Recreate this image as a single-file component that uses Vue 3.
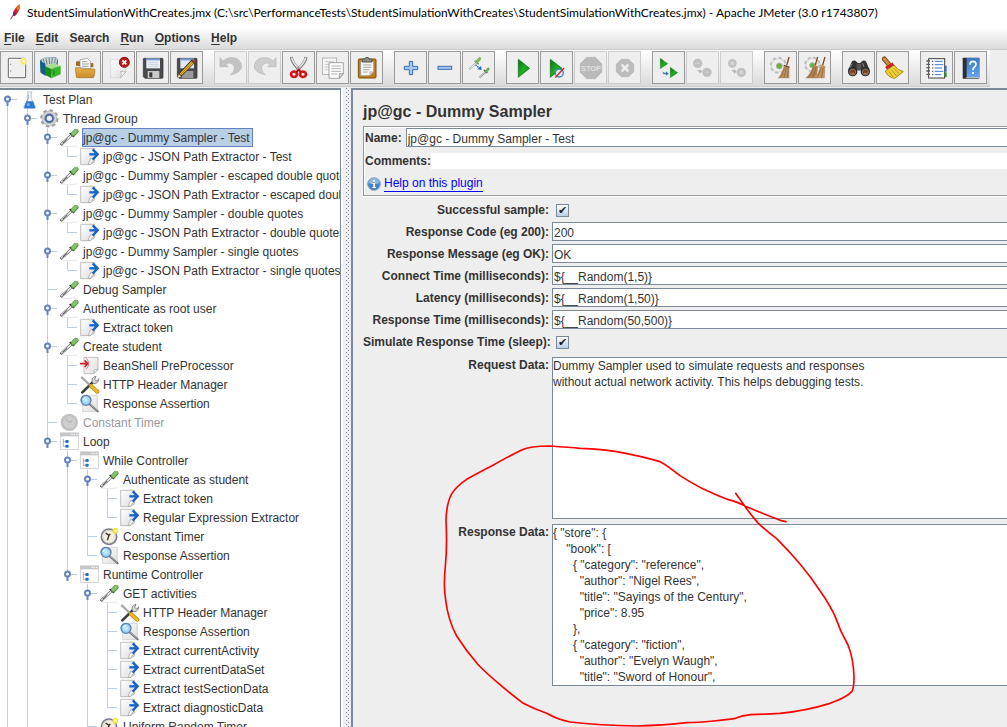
<template>
  <div class="window">
    <!-- icon library: toolbar icons use a 93x93 box, tree icons a 60x57 box -->
    <svg class="icon-defs" aria-hidden="true">
      <defs>
        <linearGradient id="gGreen" x1="0" y1="0" x2="1" y2="1">
          <stop offset="0" stop-color="#0c6a10" />
          <stop offset="0.5" stop-color="#1fb022" />
          <stop offset="1" stop-color="#0a7a10" />
        </linearGradient>
        <linearGradient id="gPage" x1="0" y1="0" x2="1" y2="1">
          <stop offset="0" stop-color="#ffffff" />
          <stop offset="1" stop-color="#dcdcdc" />
        </linearGradient>
        <linearGradient id="gFolder" x1="0" y1="0" x2="0" y2="1">
          <stop offset="0" stop-color="#e9b44c" />
          <stop offset="1" stop-color="#c8892a" />
        </linearGradient>
        <linearGradient id="gBook" x1="0" y1="0" x2="0" y2="1">
          <stop offset="0" stop-color="#3a76c4" />
          <stop offset="1" stop-color="#64a4ee" />
        </linearGradient>
        <radialGradient id="gLens">
          <stop offset="0" stop-color="#d8f3ff" />
          <stop offset="1" stop-color="#7cc4ec" />
        </radialGradient>
      </defs>

      <symbol id="new" viewBox="3 3 93 93">
        <rect x="25" y="22" width="52" height="58" rx="2" fill="url(#gPage)" stroke="#686868" stroke-width="3" />
        <rect x="29" y="26" width="44" height="50" fill="#efefef" stroke="#fff" stroke-width="2" />
        <path d="M32 38v4M32 58v4" stroke="#888" stroke-width="3" />
        <circle cx="71" cy="31" r="11" fill="#f7ee9a" />
        <circle cx="71" cy="31" r="7" fill="#f3e14e" />
        <circle cx="71" cy="31" r="4" fill="#fffde0" />
      </symbol>
      <symbol id="templates" viewBox="3 3 93 93">
        <path d="M18 28L30 20L66 19L72 26V62L36 74L20 64Z" fill="#287f9f" />
        <path d="M22 26L30 20H66L70 24L66 46L30 44Z" fill="#c9d3d5" />
        <path d="M28 24l4 18M36 22l3 18M45 21l2 18M55 21l-2 18M64 22l-3 18" stroke="#6e8286" stroke-width="3" />
        <path d="M18 30l16 8v36l-14-9z" fill="#155f86" />
        <path d="M34 46L52 54V82L35 72Z" fill="#1e8a1e" />
        <path d="M52 54L80 44V70L52 82Z" fill="#37b82c" />
        <path d="M34 46L60 36L80 44L52 54Z" fill="#a7e08d" />
        <path d="M60 58v14" stroke="#1e8a1e" stroke-width="4" />
      </symbol>
      <symbol id="open" viewBox="3 3 93 93">
        <path d="M24 44V34q0-3 3-3h12l4 5h30q3 0 3 3v10" fill="#a4681a" />
        <path d="M36 50V26l22-4l10 10v22z" fill="#fbfbfb" stroke="#8d8d8d" stroke-width="2" />
        <path d="M42 32h16M42 39h20M42 46h20" stroke="#9d9d9d" stroke-width="3" />
        <path d="M22 50h12l8 4h37q3 0 2 4l-3 19q-1 3-4 3H28q-3 0-3-3z" fill="url(#gFolder)" stroke="#a96f1a" stroke-width="2" />
      </symbol>
      <symbol id="close" viewBox="3 3 93 93">
        <path d="M26 26H72V62L56 80H26Z" fill="url(#gPage)" stroke="#d2d2d2" stroke-width="2" />
        <path d="M72 62L56 80Q60 68 56 60Q64 65 72 62Z" fill="#fff" stroke="#9a9a9a" stroke-width="2" />
        <circle cx="67" cy="34" r="15" fill="#c01414" stroke="#8d0a0a" stroke-width="3" />
        <path d="M61 28l12 12M73 28l-12 12" stroke="#fff" stroke-width="5" />
      </symbol>
      <symbol id="save" viewBox="3 3 93 93">
        <path d="M24 22H78q3 0 3 3V79q0 3-3 3H27l-5-5V25q0-3 2-3z" fill="#4a4a4e" stroke="#2c2c2e" stroke-width="2" />
        <rect x="31" y="23" width="41" height="29" fill="#eef3fa" />
        <rect x="31" y="23" width="41" height="5" fill="#6d9ad4" />
        <path d="M36 34h31M36 40h31M36 46h31" stroke="#b9c0cb" stroke-width="2" />
        <rect x="35" y="60" width="35" height="21" fill="#c9c9c9" />
        <rect x="40" y="64" width="9" height="15" fill="#3b3b3e" />
      </symbol>
      <symbol id="saveas" viewBox="3 3 93 93">
        <path d="M24 22H78q3 0 3 3V79q0 3-3 3H27l-5-5V25q0-3 2-3z" fill="#4a4a4e" stroke="#2c2c2e" stroke-width="2" />
        <rect x="31" y="23" width="41" height="29" fill="#dfe8f5" />
        <rect x="31" y="23" width="41" height="5" fill="#6d9ad4" />
        <rect x="35" y="60" width="35" height="21" fill="#9a9a9a" />
        <path d="M22 82L27 66L66 25L76 34L36 75Z" fill="#2f2a1a" />
        <path d="M28 69L64 31L71 37L35 73Z" fill="#e9b52c" />
        <path d="M31 72L68 33" stroke="#8a6512" stroke-width="2" />
        <path d="M66 29L70 25L77 31L73 36Z" fill="#b5432d" />
        <path d="M22 82L26 70L34 76Z" fill="#efdcb0" />
      </symbol>
      <symbol id="undo" viewBox="3 3 93 93">
        <path d="M18 20V47H43L35 39Q52 31 60 44Q65 58 50 71Q82 66 83 45Q80 18 47 20Q34 22 27 30Z" fill="#c3c3c3" stroke="#b6b6b6" stroke-width="2" />
      </symbol>
      <symbol id="redo" viewBox="3 3 93 93">
        <path d="M84 20V47H59L67 39Q50 31 42 44Q37 58 52 71Q20 66 19 45Q22 18 55 20Q68 22 75 30Z" fill="#cdcdcd" stroke="#b6b6b6" stroke-width="2" />
      </symbol>
      <symbol id="cut" viewBox="3 3 93 93">
        <path d="M28 18Q30 36 54 58M72 18Q70 36 44 58" stroke="#777" stroke-width="9" fill="none" />
        <path d="M29 20Q32 36 54 57M71 20Q68 36 44 57" stroke="#e4e4e4" stroke-width="5" fill="none" />
        <circle cx="49" cy="53" r="4" fill="#d5d5d5" stroke="#666" stroke-width="2" />
        <ellipse cx="36" cy="70" rx="9" ry="8" fill="#eee" stroke="#d21717" stroke-width="8" />
        <ellipse cx="63" cy="70" rx="9" ry="8" fill="#eee" stroke="#d21717" stroke-width="8" />
        <path d="M43 64L50 56L57 64" stroke="#b40f0f" stroke-width="6" fill="none" />
      </symbol>
      <symbol id="copy" viewBox="3 3 93 93">
        <rect x="19" y="21" width="43" height="49" fill="#f7f7f7" stroke="#9a9a9a" stroke-width="2" />
        <path d="M26 32h28M26 40h28M26 48h28M26 56h28" stroke="#c6c6c6" stroke-width="3" />
        <path d="M39 35H82V68L70 82H39Z" fill="#fcfcfc" stroke="#7c7c7c" stroke-width="2" />
        <path d="M46 45h29M46 53h29M46 61h29M46 69h18" stroke="#b0b0b0" stroke-width="3" />
        <path d="M82 68L70 82V68Z" fill="#ddd" stroke="#7c7c7c" stroke-width="2" />
      </symbol>
      <symbol id="paste" viewBox="3 3 93 93">
        <rect x="25" y="24" width="53" height="57" rx="3" fill="#c17d1a" stroke="#7f4f0c" stroke-width="3" />
        <path d="M32 31H71V62L59 74H32Z" fill="#f8f8f8" stroke="#8f8f8f" stroke-width="2" />
        <path d="M39 42h25M39 49h25M39 56h20M39 63h14" stroke="#a5a5a5" stroke-width="3" />
        <path d="M71 62L59 74V62Z" fill="#ccc" stroke="#8f8f8f" />
        <path d="M37 33V27q0-3 4-3h4q0-5 6-5t6 5h5q4 0 4 3v6z" fill="#8d8f88" stroke="#4f514c" stroke-width="3" />
      </symbol>
      <symbol id="plus" viewBox="3 3 93 93">
        <path d="M46 31h10v15h15v10h-15v15h-10v-15h-15v-10h15z" fill="#a4c8ee" stroke="#3c6cae" stroke-width="3" />
      </symbol>
      <symbol id="minus" viewBox="3 3 93 93">
        <rect x="30" y="46" width="41" height="9" fill="#a4c8ee" stroke="#3c6cae" stroke-width="3" />
      </symbol>
      <symbol id="toggle" viewBox="3 3 93 93">
        <path d="M22 55L45 34" stroke="#a7ada4" stroke-width="6" />
        <path d="M23 54L45 34" stroke="#f3f3f3" stroke-width="3" />
        <path d="M38 29L50 40" stroke="#5d8450" stroke-width="4" />
        <path d="M44 33L53 23" stroke="#79b45d" stroke-width="9" stroke-linecap="round" />
        <path d="M41 42L54 53" stroke="#1b63d8" stroke-width="4" stroke-dasharray="4 2" />
        <path d="M59 57L46 55L57 45Z" fill="#1b63d8" />
        <path d="M53 79L72 62" stroke="#888" stroke-width="5" />
        <path d="M54 78L71 62" stroke="#eee" stroke-width="2" />
        <path d="M66 57L76 66" stroke="#31562a" stroke-width="4" />
        <path d="M72 61L79 54" stroke="#6ea653" stroke-width="8" stroke-linecap="round" />
      </symbol>
      <symbol id="start" viewBox="3 3 93 93">
        <path d="M37 25L71 52L37 79Z" fill="url(#gGreen)" stroke="#0a6a0e" stroke-width="2" />
      </symbol>
      <symbol id="nopause" viewBox="3 3 93 93">
        <path d="M31 25L66 52L31 79Z" fill="url(#gGreen)" stroke="#0a6a0e" stroke-width="2" />
        <circle cx="58" cy="66" r="12" fill="#dfe9f5" stroke="#4d7fbd" stroke-width="4" />
        <path d="M46 80L72 51" stroke="#d32020" stroke-width="4" />
      </symbol>
      <symbol id="stop" viewBox="3 3 93 93">
        <path d="M38 19H64L83 38V64L64 83H38L19 64V38Z" fill="#b9b9b9" stroke="#b0b0b0" stroke-width="2" />
        <text x="51" y="60" text-anchor="middle" font-family="Liberation Sans" font-size="22" font-weight="bold" fill="#e2e2e2">STOP</text>
      </symbol>
      <symbol id="shutdown" viewBox="3 3 93 93">
        <path d="M40 25H62L77 40V62L62 77H40L25 62V40Z" fill="#bcbcbc" stroke="#b0b0b0" stroke-width="2" />
        <path d="M41 41L61 61M61 41L41 61" stroke="#eee" stroke-width="8" />
      </symbol>
      <symbol id="remotestart" viewBox="3 3 93 93">
        <path d="M25 22L47 38L25 53Z" fill="url(#gGreen)" stroke="#0a6a0e" stroke-width="1" />
        <path d="M55 49L77 65L55 80Z" fill="url(#gGreen)" stroke="#0a6a0e" stroke-width="1" />
        <path d="M31 61L36 65H42V61L50 68L42 74V70H34Z" fill="#3f72ae" />
      </symbol>
      <symbol id="remotestop" viewBox="3 3 93 93">
        <circle cx="35" cy="37" r="14" fill="#c0c0c0" />
        <circle cx="63" cy="64" r="14" fill="#c0c0c0" />
        <path d="M28 37h14M56 64h14" stroke="#cecece" stroke-width="4" />
        <path d="M32 58h9v-3l8 6l-8 7v-4z" fill="#b4b4b4" />
      </symbol>
      <symbol id="remoteshutdown" viewBox="3 3 93 93">
        <circle cx="37" cy="37" r="13" fill="#c0c0c0" />
        <circle cx="64" cy="64" r="14" fill="#c0c0c0" />
        <path d="M32 32l10 10M42 32l-10 10M59 59l10 10M69 59l-10 10" stroke="#dadada" stroke-width="4" />
        <path d="M33 58h9v-3l8 6l-8 7v-4z" fill="#b4b4b4" />
      </symbol>
      <symbol id="clear" viewBox="3 3 93 93">
        <circle cx="43" cy="43" r="21" fill="#ececec" stroke="#bcbcbc" stroke-width="9" stroke-dasharray="9 7.5" />
        <circle cx="43" cy="43" r="20" fill="#efefef" stroke="#c2c2c2" stroke-width="2" />
        <circle cx="46" cy="45" r="9" fill="#62b53c" stroke="#a9b5a2" stroke-width="3" />
        <path d="M75 18L68 44" stroke="#7e4a1e" stroke-width="4" />
        <path d="M60 42L76 47V82H41Q56 66 60 42Z" fill="#b98f63" />
        <path d="M62 50L50 80M67 50L60 80M73 50L70 80" stroke="#8a6238" stroke-width="2" />
        <path d="M59 43L77 49" stroke="#6b3b17" stroke-width="3" />
      </symbol>
      <symbol id="clearall" viewBox="3 3 93 93">
        <circle cx="43" cy="41" r="20" fill="#ececec" stroke="#bcbcbc" stroke-width="9" stroke-dasharray="9 7" />
        <circle cx="43" cy="41" r="19" fill="#efefef" stroke="#c2c2c2" stroke-width="2" />
        <circle cx="43" cy="43" r="8" fill="#62b53c" stroke="#a9b5a2" stroke-width="3" />
        <path d="M59 18L52 42M81 18L74 42" stroke="#7e4a1e" stroke-width="4" />
        <path d="M46 40L60 46L56 82H22Q42 64 46 40Z" fill="#b08354" />
        <path d="M68 40L82 46L80 82H48Q64 64 68 40Z" fill="#bf966a" />
        <path d="M48 50L32 80M54 50L44 80M70 50L58 80M76 50L70 80" stroke="#83592e" stroke-width="2" />
      </symbol>
      <symbol id="search" viewBox="3 3 93 93">
        <path d="M29 33q3-5 11-4l8 7h6l8-7q8-1 11 4l10 25H18z" fill="#333" />
        <rect x="44" y="38" width="14" height="20" fill="#555" />
        <circle cx="32" cy="62" r="14" fill="#2b2b2b" />
        <circle cx="70" cy="62" r="14" fill="#2b2b2b" />
        <circle cx="32" cy="63" r="9" fill="#7b3c1d" stroke="#9b9b9b" stroke-width="2" />
        <circle cx="70" cy="63" r="9" fill="#7b3c1d" stroke="#9b9b9b" stroke-width="2" />
        <path d="M28 66q4 4 8 0M66 66q4 4 8 0" stroke="#ef8a3c" stroke-width="3" fill="none" />
        <path d="M30 38l-6 12M62 36l4 12" stroke="#8a8a8a" stroke-width="3" />
      </symbol>
      <symbol id="resetsearch" viewBox="3 3 93 93">
        <path d="M25 24L40 42" stroke="#7c4a14" stroke-width="15" stroke-linecap="round" />
        <path d="M25 24L40 42" stroke="#c98d42" stroke-width="9" stroke-linecap="round" />
        <path d="M32 58L54 42Q64 58 82 62L56 82Q36 80 28 60Z" fill="#f0cf37" stroke="#a78611" stroke-width="3" />
        <path d="M40 62L50 78M47 57L62 75M54 52L70 70" stroke="#b99a1d" stroke-width="3" />
        <path d="M30 52L52 38" stroke="#cf1c1c" stroke-width="9" />
      </symbol>
      <symbol id="functions" viewBox="3 3 93 93">
        <rect x="26" y="23" width="48" height="58" fill="#fff" stroke="#3e3e3e" stroke-width="3" />
        <rect x="74" y="44" width="6" height="18" fill="#2b6fd0" />
        <rect x="74" y="64" width="6" height="14" fill="#1f9a2e" />
        <path d="M19 30h11M19 40h11M19 50h11M19 60h11M19 70h11" stroke="#5a5a5a" stroke-width="4" />
        <path d="M36 31h4M36 41h4M36 51h4M36 61h4M36 71h4" stroke="#444" stroke-width="3" />
        <path d="M44 31h24M44 41h26M44 51h22M44 61h26M44 71h20" stroke="#3d76d4" stroke-width="3" />
      </symbol>
      <symbol id="help" viewBox="3 3 93 93">
        <rect x="26" y="20" width="50" height="63" rx="2" fill="#2d2f36" />
        <rect x="38" y="21" width="38" height="57" fill="url(#gBook)" />
        <path d="M37 80H75" stroke="#d8d8d8" stroke-width="3" />
        <path d="M48 41Q48 31 57 31Q66 31 66 40Q66 45 60 49Q57 52 57 58" fill="none" stroke="#fff" stroke-width="5" />
        <rect x="54" y="63" width="6" height="6" fill="#fff" />
      </symbol>

      <symbol id="flask" viewBox="0 0 60 57">
        <path d="M22 6H36L34 12V25L46 50Q48 56 42 56H16Q10 56 12 50L24 25V12Z" fill="#eef4fa" stroke="#9fb0c2" stroke-width="2" />
        <path d="M19 34H39L45 50Q47 55 42 55H16Q11 55 13 50Z" fill="#2b7bd6" />
        <path d="M24 14V27L18 40" stroke="#6d7f92" stroke-width="2" fill="none" />
        <circle cx="25" cy="44" r="4" fill="#8cc0f5" />
      </symbol>
      <symbol id="gear" viewBox="0 0 60 57">
        <circle cx="28" cy="28" r="23" fill="none" stroke="#9b9da1" stroke-width="9" stroke-dasharray="10 8" />
        <circle cx="28" cy="28" r="22" fill="#d9dadc" stroke="#a2a4a8" stroke-width="2" />
        <circle cx="28" cy="28" r="11" fill="#e9f0fa" stroke="#4b6aa3" stroke-width="6" />
        <circle cx="28" cy="28" r="15" fill="none" stroke="#8a93a5" stroke-width="2" />
      </symbol>
      <symbol id="dropper" viewBox="0 0 60 57">
        <path d="M2 54Q30 58 54 54" stroke="#ddd" stroke-width="2" fill="none" />
        <path d="M2 51L38 18" stroke="#6a6a6a" stroke-width="8" />
        <path d="M4 49L36 20" stroke="#f5f5f5" stroke-width="4" />
        <path d="M8 46L22 33" stroke="#555" stroke-width="3" />
        <path d="M29 15L42 27" stroke="#2c3b28" stroke-width="5" />
        <path d="M40 18L48 10" stroke="#4f873c" stroke-width="15" stroke-linecap="round" />
        <path d="M40 17L48 9" stroke="#84c26a" stroke-width="11" stroke-linecap="round" />
      </symbol>
      <symbol id="extract" viewBox="0 0 60 57">
        <path d="M2 4H44V44L30 53H2Z" fill="url(#gPage)" stroke="#a5a5a5" stroke-width="2" />
        <path d="M24 53L32 34L42 38L32 52Z" fill="#f4f4f4" stroke="#9c9c9c" stroke-width="2" />
        <path d="M28 22H50" stroke="#1464cc" stroke-width="7" />
        <path d="M38 7L53 22L38 38" stroke="#1464cc" stroke-width="7" fill="none" />
      </symbol>
      <symbol id="preproc" viewBox="0 0 60 57">
        <path d="M12 4H54V40L42 53H12Z" fill="url(#gPage)" stroke="#a5a5a5" stroke-width="2" />
        <path d="M54 40L42 53V42Z" fill="#fff" stroke="#9c9c9c" stroke-width="2" />
        <path d="M0 23H20M14 13L23 23L14 33" stroke="#cc2222" stroke-width="5" fill="none" />
        <path d="M18 5Q34 24 18 40" stroke="#cc2222" stroke-width="3" fill="none" opacity="0.6" />
      </symbol>
      <symbol id="tools" viewBox="0 0 60 57">
        <path d="M7 52L40 20" stroke="#3a3a3a" stroke-width="8" stroke-linecap="round" />
        <path d="M36 21Q34 6 48 4L44 14L51 18L56 11Q56 26 42 26Z" fill="#d5d5d5" stroke="#666" stroke-width="2" />
        <path d="M4 6L30 31" stroke="#8a8a8a" stroke-width="6" />
        <path d="M4 6L30 31" stroke="#e6e6e6" stroke-width="2" />
        <path d="M33 33L52 50" stroke="#b8860b" stroke-width="12" stroke-linecap="round" />
        <path d="M33 33L52 50" stroke="#f0b81e" stroke-width="8" stroke-linecap="round" />
      </symbol>
      <symbol id="magnifier" viewBox="0 0 60 57">
        <path d="M8 4H52V53H8Z" fill="url(#gPage)" stroke="#c8c8c8" stroke-width="2" />
        <path d="M29 31L53 52" stroke="#6a6a6a" stroke-width="6" stroke-linecap="round" />
        <path d="M30 31L52 50" stroke="#d0d0d0" stroke-width="2" />
        <circle cx="18" cy="19" r="15" fill="url(#gLens)" stroke="#5f80ab" stroke-width="4" />
        <path d="M9 18Q11 10 19 10" stroke="#fff" stroke-width="3" fill="none" />
      </symbol>
      <symbol id="timer" viewBox="0 0 60 57">
        <circle cx="27" cy="29" r="23" fill="#f3efe2" stroke="#7d7b90" stroke-width="5" />
        <circle cx="27" cy="29" r="19" fill="none" stroke="#c9c6bb" stroke-width="2" />
        <path d="M17 18L27 25L31 21M27 25L22 40" stroke="#3b3324" stroke-width="4" fill="none" />
        <circle cx="46" cy="11" r="9" fill="#f4e33a" />
        <circle cx="46" cy="11" r="4" fill="#fffbb5" />
      </symbol>
      <symbol id="timeroff" viewBox="0 0 60 57">
        <circle cx="28" cy="28" r="26" fill="#c3c3c3" />
        <circle cx="28" cy="28" r="20" fill="#cecece" stroke="#b9b9b9" stroke-width="2" />
        <path d="M17 17L27 28L37 24" stroke="#a9a9a9" stroke-width="3" fill="none" />
      </symbol>
      <symbol id="controller" viewBox="0 0 60 57">
        <rect x="1" y="3" width="54" height="49" fill="#fff" stroke="#c2c2c6" stroke-width="2" />
        <rect x="1" y="2" width="54" height="11" fill="#c6c6c8" />
        <path d="M34 7h4M41 7h4M48 7h4" stroke="#fff" stroke-width="3" />
        <path d="M10 21V43H17M10 29H17" stroke="#8a8a8a" stroke-width="2" fill="none" />
        <rect x="16" y="24" width="10" height="9" rx="3" fill="#1f6fd2" />
        <rect x="16" y="38" width="10" height="9" rx="3" fill="#1f6fd2" />
      </symbol>
    </svg>

    <header class="title-bar">
      <svg class="feather" viewBox="0 0 54 48" aria-hidden="true">
        <path d="M8 46L16 32" stroke="#7c2a68" stroke-width="3" />
        <path d="M15 34Q14 20 28 6L34 1L36 6Q36 22 20 37Z" fill="#c9222f" />
        <path d="M24 12L34 1L36 6Q35 14 30 22Z" fill="#ee7a1f" />
        <path d="M15 34Q14 28 18 20L25 29L20 37Z" fill="#8a2463" />
      </svg>
      <span>{{ title }}</span>
    </header>

    <nav class="menu-bar">
      <button v-for="item in menus" :key="item.key + item.rest" type="button" class="menu">
        <u v-if="item.key">{{ item.key }}</u>{{ item.rest }}
      </button>
    </nav>

    <div class="toolbar-row">
      <div class="toolbar">
        <div v-for="(group, i) in toolbar" :key="i" class="tool-group">
          <button
              v-for="name in group"
              :key="name"
              type="button"
              class="tool"
              :aria-label="name"
              :disabled="disabledTools.includes(name)"
          >
            <svg class="tool-icon"><use :href="'#' + name" /></svg>
          </button>
        </div>
      </div>
    </div>

    <div class="workspace">
      <div class="tree-pane">
        <ul class="tree">
          <li v-for="(node, i) in rows" :key="i" class="tree-row">
            <svg
                v-for="(cell, c) in node.cells"
                :key="c"
                class="guide"
                viewBox="0 0 20 19"
                aria-hidden="true"
            >
              <path v-if="guidePaths[cell]" :d="guidePaths[cell]" class="guide-line" />
              <g v-if="node.open && c === node.depth">
                <path d="M7.5 11V16" class="handle-stem" />
                <circle cx="7.5" cy="9" r="2.5" class="handle" />
              </g>
            </svg>
            <svg class="tree-icon" aria-hidden="true"><use :href="'#' + node.icon" /></svg>
            <span class="tree-label" :class="{ selected: node.selected, off: node.off }">{{ node.text }}</span>
          </li>
        </ul>
      </div>

      <div class="divider"></div>

      <main class="editor">
        <h1>jp@gc - Dummy Sampler</h1>

        <section class="info">
          <div class="info-row name-row">
            <label for="name">Name:</label>
            <input id="name" v-model="name" type="text" class="field" />
          </div>
          <div class="info-row comments-row">
            <label for="comments">Comments:</label>
            <input id="comments" v-model="comments" type="text" class="plain-field" />
          </div>
          <div class="info-row help-row">
            <svg class="info-icon" viewBox="0 0 42 42" aria-hidden="true">
              <circle cx="21" cy="21" r="19" fill="#4a83c3" stroke="#8fa9c4" stroke-width="3" />
              <path d="M5 18a16 15 0 0 1 32 0q-16 8-32 0z" fill="#8db6e2" />
              <rect x="18" y="9" width="6" height="5" fill="#fff" />
              <path d="M16 18h8v12h3v3h-11v-3h3v-9h-3z" fill="#fff" />
            </svg>
            <a href="#help">Help on this plugin</a>
          </div>
        </section>

        <form class="form" @submit.prevent>
          <template v-for="f in fields" :key="f.id">
            <label :for="f.id">{{ f.label }}</label>
            <input v-if="f.check" :id="f.id" v-model="f.value" type="checkbox" class="check" />
            <input v-else :id="f.id" v-model="f.value" type="text" class="field" />
          </template>
        </form>

        <div class="form data">
          <label for="request">Request Data:</label>
          <textarea id="request" v-model="requestData" rows="10" spellcheck="false"></textarea>
          <label for="response">Response Data:</label>
          <textarea id="response" v-model="responseData" rows="10" spellcheck="false"></textarea>
        </div>

        <!-- freehand mark round the response data -->
        <svg class="scribble" viewBox="0 0 1320 891" aria-hidden="true">
          <path :d="scribble" />
        </svg>
      </main>
    </div>
  </div>
</template>

<script setup>
import { ref, reactive } from 'vue';

const title = 'StudentSimulationWithCreates.jmx (C:\\src\\PerformanceTests\\StudentSimulationWithCreates\\StudentSimulationWithCreates.jmx) - Apache JMeter (3.0 r1743807)';

const menus = [
  { key: 'F', rest: 'ile' },
  { key: 'E', rest: 'dit' },
  { key: '', rest: 'Search' },
  { key: 'R', rest: 'un' },
  { key: 'O', rest: 'ptions' },
  { key: 'H', rest: 'elp' }
];

const toolbar = [
  ['new', 'templates', 'open', 'close', 'save', 'saveas'],
  ['undo', 'redo', 'cut', 'copy', 'paste'],
  ['plus', 'minus', 'toggle'],
  ['start', 'nopause', 'stop', 'shutdown'],
  ['remotestart', 'remotestop', 'remoteshutdown'],
  ['clear', 'clearall'],
  ['search', 'resetsearch'],
  ['functions', 'help']
];

const disabledTools = ['undo', 'redo', 'stop', 'shutdown', 'remotestop', 'remoteshutdown'];

// Test plan nodes in display order
const nodes = [
  { depth: 0, icon: 'flask', text: 'Test Plan', open: true },
  { depth: 1, icon: 'gear', text: 'Thread Group', open: true },
  { depth: 2, icon: 'dropper', text: 'jp@gc - Dummy Sampler - Test', open: true, selected: true },
  { depth: 3, icon: 'extract', text: 'jp@gc - JSON Path Extractor - Test' },
  { depth: 2, icon: 'dropper', text: 'jp@gc - Dummy Sampler - escaped double quotes', open: true },
  { depth: 3, icon: 'extract', text: 'jp@gc - JSON Path Extractor - escaped double quotes' },
  { depth: 2, icon: 'dropper', text: 'jp@gc - Dummy Sampler - double quotes', open: true },
  { depth: 3, icon: 'extract', text: 'jp@gc - JSON Path Extractor - double quotes' },
  { depth: 2, icon: 'dropper', text: 'jp@gc - Dummy Sampler - single quotes', open: true },
  { depth: 3, icon: 'extract', text: 'jp@gc - JSON Path Extractor - single quotes' },
  { depth: 2, icon: 'dropper', text: 'Debug Sampler' },
  { depth: 2, icon: 'dropper', text: 'Authenticate as root user', open: true },
  { depth: 3, icon: 'extract', text: 'Extract token' },
  { depth: 2, icon: 'dropper', text: 'Create student', open: true },
  { depth: 3, icon: 'preproc', text: 'BeanShell PreProcessor' },
  { depth: 3, icon: 'tools', text: 'HTTP Header Manager' },
  { depth: 3, icon: 'magnifier', text: 'Response Assertion' },
  { depth: 2, icon: 'timeroff', text: 'Constant Timer', off: true },
  { depth: 2, icon: 'controller', text: 'Loop', open: true },
  { depth: 3, icon: 'controller', text: 'While Controller', open: true },
  { depth: 4, icon: 'dropper', text: 'Authenticate as student', open: true },
  { depth: 5, icon: 'extract', text: 'Extract token' },
  { depth: 5, icon: 'extract', text: 'Regular Expression Extractor' },
  { depth: 4, icon: 'timer', text: 'Constant Timer' },
  { depth: 4, icon: 'magnifier', text: 'Response Assertion' },
  { depth: 3, icon: 'controller', text: 'Runtime Controller', open: true },
  { depth: 4, icon: 'dropper', text: 'GET activities', open: true },
  { depth: 5, icon: 'tools', text: 'HTTP Header Manager' },
  { depth: 5, icon: 'magnifier', text: 'Response Assertion' },
  { depth: 5, icon: 'extract', text: 'Extract currentActivity' },
  { depth: 5, icon: 'extract', text: 'Extract currentDataSet' },
  { depth: 5, icon: 'extract', text: 'Extract testSectionData' },
  { depth: 5, icon: 'extract', text: 'Extract diagnosticData' },
  { depth: 4, icon: 'timer', text: 'Uniform Random Timer' }
];

const guidePaths = {
  line: 'M7.5 0V19',
  tee: 'M7.5 0V19M7.5 9.5H17',
  elbow: 'M7.5 0V10M7.5 9.5H17',
  first: 'M7.5 10V19M7.5 9.5H17',
  blank: ''
};

// True when the branch at this depth goes on below the given row
const continues = (index, depth) => {
  // the two outer branches go on past the last listed node
  if (depth < 2) return true;
  for (let i = index + 1; i < nodes.length; i++) {
    if (nodes[i].depth < depth) return false;
    if (nodes[i].depth === depth) return true;
  }
  return false;
};

const rows = nodes.map((node, index) => {
  const cells = [];
  for (let d = 0; d <= node.depth; d++) {
    const more = continues(index, d);
    if (d < node.depth) cells.push(more ? 'line' : 'blank');
    else if (index === 0) cells.push('first');
    else cells.push(more ? 'tee' : 'elbow');
  }
  return { ...node, cells };
});

const name = ref('jp@gc - Dummy Sampler - Test');
const comments = ref('');

const fields = reactive([
  { id: 'success', label: 'Successful sample:', check: true, value: true },
  { id: 'code', label: 'Response Code (eg 200):', value: '200' },
  { id: 'message', label: 'Response Message (eg OK):', value: 'OK' },
  { id: 'connect', label: 'Connect Time (milliseconds):', value: '${__Random(1,5)}' },
  { id: 'latency', label: 'Latency (milliseconds):', value: '${__Random(1,50)}' },
  { id: 'time', label: 'Response Time (milliseconds):', value: '${__Random(50,500)}' },
  { id: 'sleep', label: 'Simulate Response Time (sleep):', check: true, value: true }
]);

const requestData = ref(`Dummy Sampler used to simulate requests and responses
without actual network activity. This helps debugging tests.`);

const responseData = ref(`{ "store": {
    "book": [
      { "category": "reference",
        "author": "Nigel Rees",
        "title": "Sayings of the Century",
        "price": 8.95
      },
      { "category": "fiction",
        "author": "Evelyn Waugh",
        "title": "Sword of Honour",`);

const scribble = 'M917 190L940 222Q960 252 985 280Q1010 304 1040 326Q1076 362 1110 402Q1142 440 1170 482Q1198 522 1214 556L1233 604L1254 645Q1270 684 1272 740Q1272 772 1266 784Q1250 802 1200 820Q1130 842 1050 850Q1000 853 962 854Q938 856 916 865Q890 869 850 873Q800 878 770 878Q700 886 620 888Q510 886 420 876Q380 868 350 850Q310 836 280 820Q240 790 210 764Q170 730 145 705Q108 662 80 618Q54 570 47 510Q40 470 46 410Q52 350 48 270Q50 216 66 190Q80 168 110 148Q160 120 185 108Q230 82 275 60Q300 48 360 48Q420 52 450 55Q520 58 560 65Q640 80 690 95Q706 102 750 137Q800 168 820 177Q860 196 895 209Q916 214 950 230Q1000 252 1054 272L1068 275';
</script>

<style>
body {
  margin: 0;
}
</style>

<style scoped>
.window {
  height: 100vh;
  display: flex;
  flex-direction: column;
  overflow: hidden;
  background: #eeeeee;
  color: #333333;
  font-family: 'Liberation Sans', Arial, sans-serif;
  font-size: 12px;
}

.icon-defs {
  position: absolute;
  width: 0;
  height: 0;
}

button,
input,
textarea {
  font: inherit;
  color: inherit;
  box-sizing: border-box;
  border-radius: 0;
  outline: none;
}

.title-bar {
  flex: none;
  display: flex;
  align-items: center;
  height: 24px;
  padding: 0 8px 4px;
  gap: 1px;
  background: #ffffff;
  color: #000000;
  font-family: Lato, sans-serif;
  white-space: nowrap;
}

.feather {
  width: 18px;
  height: 16px;
}

.menu-bar {
  flex: none;
  display: flex;
  align-items: center;
  gap: 11px;
  box-sizing: border-box;
  height: 22px;
  padding: 0 4px 2px;
  background: linear-gradient(#ffffff, #dadada);
  border-bottom: 1px solid #cccccc;
}

.menu {
  padding: 0;
  border: 0;
  background: none;
  font-weight: bold;
}

.menu u {
  text-underline-offset: 2px;
}

.toolbar-row {
  flex: none;
  display: flex;
  height: 38px;
  box-sizing: border-box;
  border-bottom: 1px solid #eeeeee;
}

.toolbar {
  display: flex;
  gap: 11px;
  padding: 1px 3px 0 0;
  background: linear-gradient(#ffffff, #dadada);
  border-bottom: 1px solid #cccccc;
}

.tool-group {
  display: flex;
  gap: 1px;
}

.tool {
  flex: none;
  width: 33px;
  height: 33px;
  padding: 0;
  border: 1px solid #999999;
  background: #eeeeee;
}

.tool:disabled {
  border-color: #cccccc;
}

.tool-icon {
  display: block;
  width: 31px;
  height: 31px;
}

.workspace {
  flex: 1;
  min-height: 0;
  display: flex;
}

.tree-pane {
  flex: none;
  width: 34%;
  max-width: 341px;
  box-sizing: border-box;
  overflow: hidden;
  background: #ffffff;
  border-top: 2px solid #7a8a99;
  border-right: 1px solid #7a8a99;
}

.tree {
  margin: 0;
  padding: 0;
  list-style: none;
}

.tree-row {
  display: flex;
  height: 19px;
  white-space: nowrap;
}

.guide {
  flex: none;
  width: 20px;
  height: 19px;
}

.guide-line {
  fill: none;
  stroke: #b8cfe5;
  stroke-width: 1;
}

.handle {
  fill: #ffffff;
  stroke: #6382bf;
  stroke-width: 2;
}

.handle-stem {
  stroke: #6382bf;
  stroke-width: 2;
}

.tree-icon {
  flex: none;
  width: 20px;
  height: 19px;
  margin-right: 2px;
}

.tree-label {
  box-sizing: border-box;
  height: 19px;
  padding: 0 2px 0 0;
  border: 1px solid transparent;
  line-height: 18px;
}

.tree-label.selected {
  background: #b8cfe5;
  border-color: #6382bf;
}

.tree-label.off {
  color: #999999;
}

.divider {
  flex: none;
  width: 10px;
  background:
    linear-gradient(#7a8a99 1px, transparent 1px) 5px 0 / 1px 4px repeat-y,
    linear-gradient(#7a8a99 1px, transparent 1px) 7px 2px / 1px 4px repeat-y,
    linear-gradient(90deg, #ffffff 2px, #eeeeee 2px);
}

.editor {
  position: relative;
  flex: 1;
  min-width: 0;
  padding: 12px 0 0 10px;
  border-top: 2px solid #7a8a99;
  border-left: 2px solid #7a8a99;
}

h1 {
  margin: 0;
  font-size: 16px;
  line-height: 20px;
}

label {
  font-weight: bold;
  line-height: 16px;
  white-space: nowrap;
}

.info {
  display: flex;
  flex-direction: column;
  gap: 6px;
  margin-top: 4px;
  padding: 1px 0 3px 1px;
  border: 1px solid #999999;
  border-right: 0;
  box-shadow: inset 1px 1px 0 #ffffff, 0 1px 0 #ffffff;
}

.info-row {
  display: flex;
  align-items: center;
}

.name-row {
  gap: 4px;
}

.help-row {
  gap: 3px;
  padding-left: 2px;
}

.info-icon {
  width: 14px;
  height: 14px;
}

a {
  color: #0000ff;
  line-height: 16px;
  text-decoration: none;
  border-bottom: 1px solid #0000ff;
}

.field {
  flex: 1;
  min-width: 0;
  height: 19px;
  padding: 2px 1px 0;
  background: #ffffff;
  border: 1px solid #7a8a99;
  border-right: 0;
}

.plain-field {
  flex: 1;
  min-width: 0;
  height: 16px;
  padding: 0 1px;
  border: 0;
  background: #ffffff;
}

.form {
  display: grid;
  grid-template-columns: 186px 1fr;
  grid-auto-rows: 19px;
  gap: 3px;
  align-items: center;
  margin-top: 4px;
}

.form label {
  text-align: right;
}

.data {
  grid-auto-rows: auto;
  align-items: start;
  row-gap: 5px;
  margin-top: 6px;
}

.check {
  appearance: none;
  display: grid;
  place-items: center;
  width: 13px;
  height: 13px;
  margin: 2px 0 0 4px;
  border: 1px solid #7a8a99;
  background: linear-gradient(#ffffff, #b8cfe5);
}

.check:checked::after {
  content: '✔';
  font: 11px/11px 'DejaVu Sans', sans-serif;
  color: #222222;
}

textarea {
  display: block;
  width: 100%;
  padding: 0;
  border: 1px solid #7a8a99;
  border-right: 0;
  background: #ffffff;
  line-height: 16px;
  white-space: pre;
  overflow: hidden;
  resize: none;
}

.scribble {
  position: absolute;
  left: 77px;
  top: 340px;
  width: 440px;
  height: 297px;
  overflow: visible;
  pointer-events: none;
}

.scribble path {
  fill: none;
  stroke: #ff0000;
  stroke-width: 5;
  stroke-linecap: round;
  stroke-linejoin: round;
}
</style>
